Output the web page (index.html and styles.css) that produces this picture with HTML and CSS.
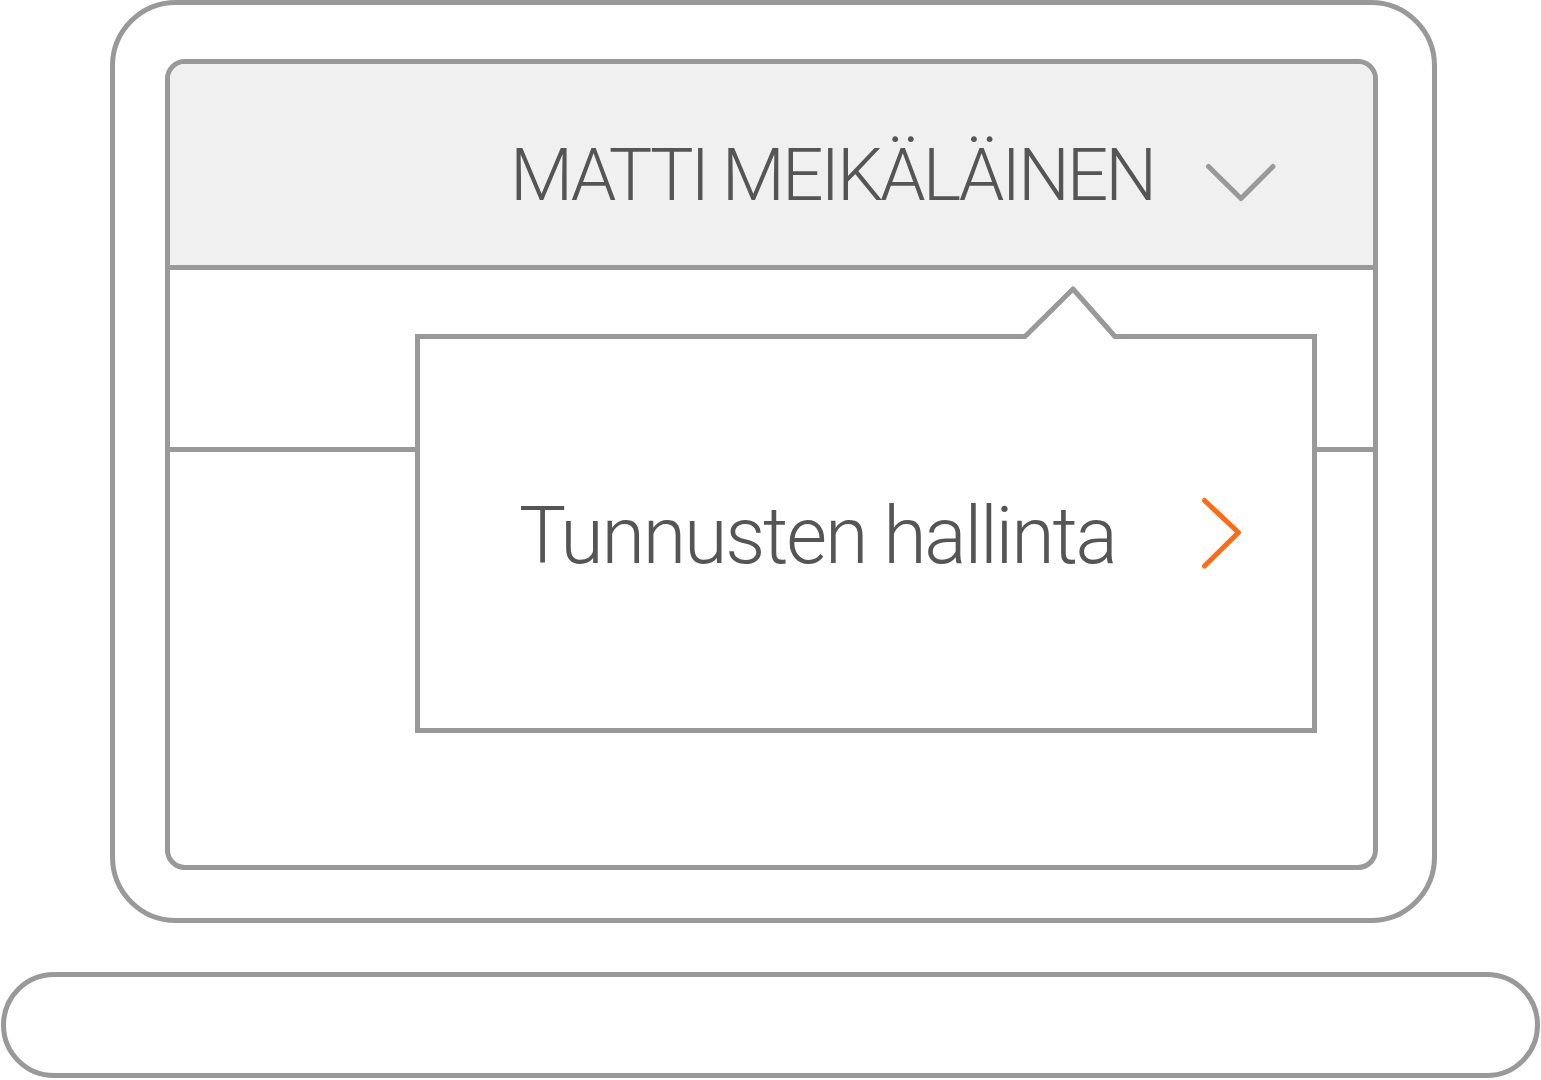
FILE: index.html
```html
<!DOCTYPE html>
<html lang="fi">
<head>
<meta charset="utf-8">
<title>Tunnusten hallinta</title>
<link rel="stylesheet" href="styles.css">
</head>
<body>
<div class="scene">
  <div class="lid">
    <div class="screen">
      <div class="header">
        <span class="user-name">MATTI MEIKÄLÄINEN</span>
        <svg class="chevron-down" width="72" height="40" viewBox="0 0 72 40">
          <polyline points="3.5,3.5 36,35.5 68,3.5" fill="none" stroke="#999" stroke-width="5" stroke-linecap="round" stroke-linejoin="round"/>
        </svg>
      </div>
      <div class="band"></div>
      <div class="rest"></div>

      <div class="popover">
        <svg class="popover-arrow" width="110" height="66" viewBox="0 0 110 66">
          <polygon points="8,58 58,13 100,58 100,66 8,66" fill="#fff"/>
          <polyline points="5,60.5 10,60.5 58,13 100,60.5 105,60.5" fill="none" stroke="#999" stroke-width="5" stroke-linejoin="round" stroke-linecap="round"/>
        </svg>
        <div class="menu-item">
          <span class="menu-label">Tunnusten hallinta</span>
          <svg class="chevron-right" width="44" height="74" viewBox="0 0 44 74">
            <polyline points="4.5,3.5 38.5,35.5 4.5,69" fill="none" stroke="#ff6a13" stroke-width="5" stroke-linecap="round" stroke-linejoin="round"/>
          </svg>
        </div>
      </div>
    </div>
  </div>
  <div class="base"></div>
</div>
</body>
</html>
```

FILE: styles.css
```css
* {
  box-sizing: border-box;
}

html, body {
  margin: 0;
  padding: 0;
  background: #ffffff;
}

body {
  width: 1541px;
  height: 1080px;
  overflow: hidden;
  font-family: "Roboto", "Lato", "DejaVu Sans", sans-serif;
  color: #555555;
}

.scene {
  display: flex;
  flex-direction: column;
  width: 1541px;
}

.lid {
  margin-left: 110px;
  width: 1327px;
  height: 923px;
  border: 5px solid #999999;
  border-radius: 66px;
  padding: 54px 0 0 50px;
}

.screen {
  position: relative;
  width: 1213px;
  height: 811px;
  border: 5px solid #999999;
  border-radius: 20px;
  display: flex;
  flex-direction: column;
}

.header {
  height: 206px;
  background: #f0f0f0;
  border-bottom: 5px solid #999999;
  border-radius: 15px 15px 0 0;
  display: flex;
  align-items: center;
  padding-left: 340px;
  padding-top: 22px;
}

.user-name {
  font-size: 73px;
  font-weight: 300;
  line-height: 1;
  letter-spacing: -3px;
  white-space: nowrap;
  color: #555555;
}

.chevron-down {
  display: block;
  flex-shrink: 0;
  margin-left: auto;
  margin-right: 96px;
  margin-top: 14px;
}

.band {
  height: 182px;
  border-bottom: 5px solid #999999;
}

.rest {
  flex: 1;
}

.popover {
  position: absolute;
  left: 245px;
  top: 270px;
  width: 902px;
  height: 399px;
  border: 5px solid #999999;
  background: #ffffff;
  display: flex;
  align-items: center;
}

.popover-arrow {
  position: absolute;
  left: 595px;
  top: -63px;
  display: block;
}

.menu-item {
  flex: 1;
  display: flex;
  align-items: center;
  justify-content: space-between;
  padding-left: 99px;
  padding-right: 68px;
}

.menu-label {
  font-size: 79px;
  font-weight: 300;
  line-height: 1;
  letter-spacing: -2.2px;
  white-space: nowrap;
  color: #555555;
  margin-top: 5px;
}

.chevron-right {
  display: block;
  flex-shrink: 0;
}

.base {
  margin-top: 49px;
  margin-left: 1px;
  width: 1539px;
  height: 106px;
  border: 5px solid #999999;
  border-radius: 53px;
}
```
